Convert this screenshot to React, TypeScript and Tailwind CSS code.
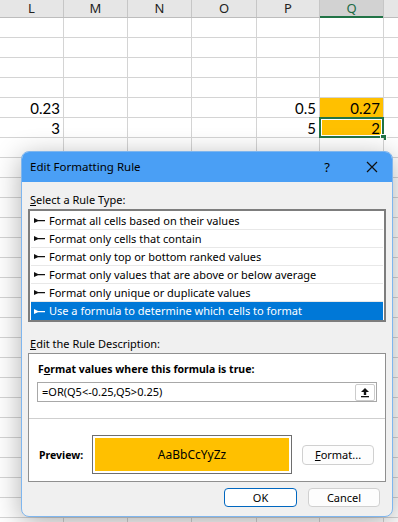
import React from "react";

const cols = [
    {name: "L", w: "w-[64px]"},
    {name: "M", w: "w-[64px]"},
    {name: "N", w: "w-[64px]"},
    {name: "O", w: "w-[65px]"},
    {name: "P", w: "w-[63px]"},
    {name: "Q", w: "w-[64px]"},
];

const values: Record<number, Record<string, string>> = {
    4: {L: "0.23", P: "0.5", Q: "0.27"},
    5: {L: "3", P: "5", Q: "2"},
};

const rules = [
    "Format all cells based on their values",
    "Format only cells that contain",
    "Format only top or bottom ranked values",
    "Format only values that are above or below average",
    "Format only unique or duplicate values",
    "Use a formula to determine which cells to format",
];

function RuleMark({light}: {light: boolean}) {
    return (
        <svg width="11" height="7" viewBox="0 0 11 7" className="shrink-0">
            <path d="M0 1 L0 6 L4 4.3 L11 4.3 L11 2.9 L4 2.9 Z" fill={light ? "#ffffff" : "#111111"} />
        </svg>
    );
}

function Sheet() {
    const rows = Array.from({length: 26}, (_, i) => i);
    return (
        <div className="flex flex-col font-['Lato',sans-serif]">
            <div className="flex h-[18px] bg-[#e6e6e6] border-b border-[#bdbdbd]">
                {cols.map((c) => (
                    <div
                        key={c.name}
                        className={`${c.w} shrink-0 relative flex items-center justify-center border-r border-[#c6c6c6] text-[13px] leading-[17px] font-['Noto_Sans',sans-serif] ${
                            c.name === "Q" ? "bg-[#d2d2d2] text-[#1b6b44]" : "text-[#222]"
                        }`}
                    >
                        {c.name}
                        {c.name === "Q" && <div className="absolute left-0 right-0 -bottom-[1px] h-[2px] bg-[#217346]" />}
                    </div>
                ))}
                <div className="flex-1" />
            </div>
            {rows.map((r) => (
                <div key={r} className="flex h-[20px]">
                    {cols.map((c) => {
                        const v = values[r]?.[c.name];
                        const hot = c.name === "Q" && v !== undefined;
                        return (
                            <div
                                key={c.name}
                                className={`${c.w} shrink-0 relative flex items-center justify-end pr-[3px] pt-[1px] text-[15px] leading-none text-black border-r border-b border-[#d4d4d4] ${
                                    hot ? "bg-[#ffc000]" : "bg-white"
                                }`}
                            >
                                {v}
                                {hot && r === 5 && (
                                    <>
                                        <div className="absolute -left-[1px] -top-[1px] -right-[1px] -bottom-[1px] border-2 border-[#217346] shadow-[inset_0_0_0_1px_white]" />
                                        <div className="absolute -right-[4px] -bottom-[4px] w-[7px] h-[7px] bg-[#217346] border border-white" />
                                    </>
                                )}
                            </div>
                        );
                    })}
                    <div className="flex-1 border-b border-[#d4d4d4]" />
                </div>
            ))}
        </div>
    );
}

function Dialog() {
    return (
        <div className="absolute left-[21px] top-[151px] w-[372px] h-[366px] rounded-[8px] border border-[#7fb6ee] bg-[#f0f0f0] shadow-[0_6px_28px_rgba(0,0,0,0.32)] overflow-hidden flex flex-col font-['Noto_Sans',sans-serif] text-[11px] leading-[16px] text-black">
            <div className="h-[30px] bg-[#4a9ff5] flex items-center pl-[8px] pr-[14px] shrink-0">
                <span className="flex-1 text-[11.5px]">Edit Formatting Rule</span>
                <span className="text-[13px] mr-[36px]">?</span>
                <svg width="12" height="12" viewBox="0 0 12 12">
                    <path d="M1 1 L11 11 M11 1 L1 11" stroke="#111" strokeWidth="1.2" />
                </svg>
            </div>
            <div className="flex flex-col px-[6px]">
                <div className="mt-[10px] ml-[2px] h-[16px]">
                    <span className="underline">S</span>elect a Rule Type:
                </div>
                <div className="mt-[1px] border-2 border-[#7d7d7d] bg-white px-[1px] pt-[1px] flex flex-col">
                    {rules.map((t, i) => {
                        const sel = i === rules.length - 1;
                        return (
                            <div
                                key={t}
                                className={`h-[18px] flex items-center gap-[4px] pl-[3px] whitespace-nowrap ${
                                    sel ? "bg-[#0078d7] text-white" : "border-b border-[#e8e8e8]"
                                }`}
                            >
                                <RuleMark light={sel} />
                                <span>{t}</span>
                            </div>
                        );
                    })}
                </div>
                <div className="mt-[14px] ml-[2px] h-[16px]">
                    <span className="underline">E</span>dit the Rule Description:
                </div>
                <div className="mt-[1px] border border-[#8f8f8f] bg-white flex flex-col h-[129px]">
                    <div className="mt-[7px] ml-[9px] h-[16px] font-bold text-[10.5px]">
                        F<span className="underline">o</span>rmat values where this formula is true:
                    </div>
                    <div className="mt-[5px] mx-[8px] h-[20px] border border-[#a8a8a8] flex items-center pl-[4px] pr-[1px]">
                        <span className="flex-1">=OR(Q5&lt;-0.25,Q5&gt;0.25)</span>
                        <div className="w-[20px] h-[17px] rounded-[2px] border border-[#cccccc] bg-white flex items-center justify-center">
                            <svg width="10" height="11" viewBox="0 0 10 11">
                                <path d="M5 1 L9 5 L6.2 5 L6.2 8 L3.8 8 L3.8 5 L1 5 Z" fill="#111" />
                                <rect x="1" y="9" width="8" height="1.3" fill="#111" />
                            </svg>
                        </div>
                    </div>
                    <div className="mt-[16px] border-t border-[#cfcfcf]" />
                    <div className="flex items-center mt-[16px]">
                        <span className="ml-[10px] w-[53px] font-bold text-[10.5px]">Preview:</span>
                        <div className="w-[200px] h-[39px] border border-[#6e6e6e] p-[2px]">
                            <div className="h-full bg-[#ffc000] flex items-center justify-center text-[12px]">
                                AaBbCcYyZz
                            </div>
                        </div>
                        <div className="ml-[10px] w-[72px] h-[20px] rounded-[4px] border border-[#d0d0d0] bg-[#fdfdfd] flex items-center justify-center">
                            <span>
                                <span className="underline">F</span>ormat...
                            </span>
                        </div>
                    </div>
                </div>
                <div className="flex justify-end gap-[11px] mt-[6px] mr-[6px]">
                    <div className="w-[73px] h-[19px] rounded-[4px] border border-[#0067c0] bg-white flex items-center justify-center">
                        OK
                    </div>
                    <div className="w-[72px] h-[19px] rounded-[4px] border border-[#d0d0d0] bg-[#fdfdfd] flex items-center justify-center">
                        Cancel
                    </div>
                </div>
            </div>
        </div>
    );
}

export default function App() {
    return (
        <div className="relative w-[398px] h-[522px] overflow-hidden bg-white">
            <Sheet />
            <Dialog />
        </div>
    );
}
